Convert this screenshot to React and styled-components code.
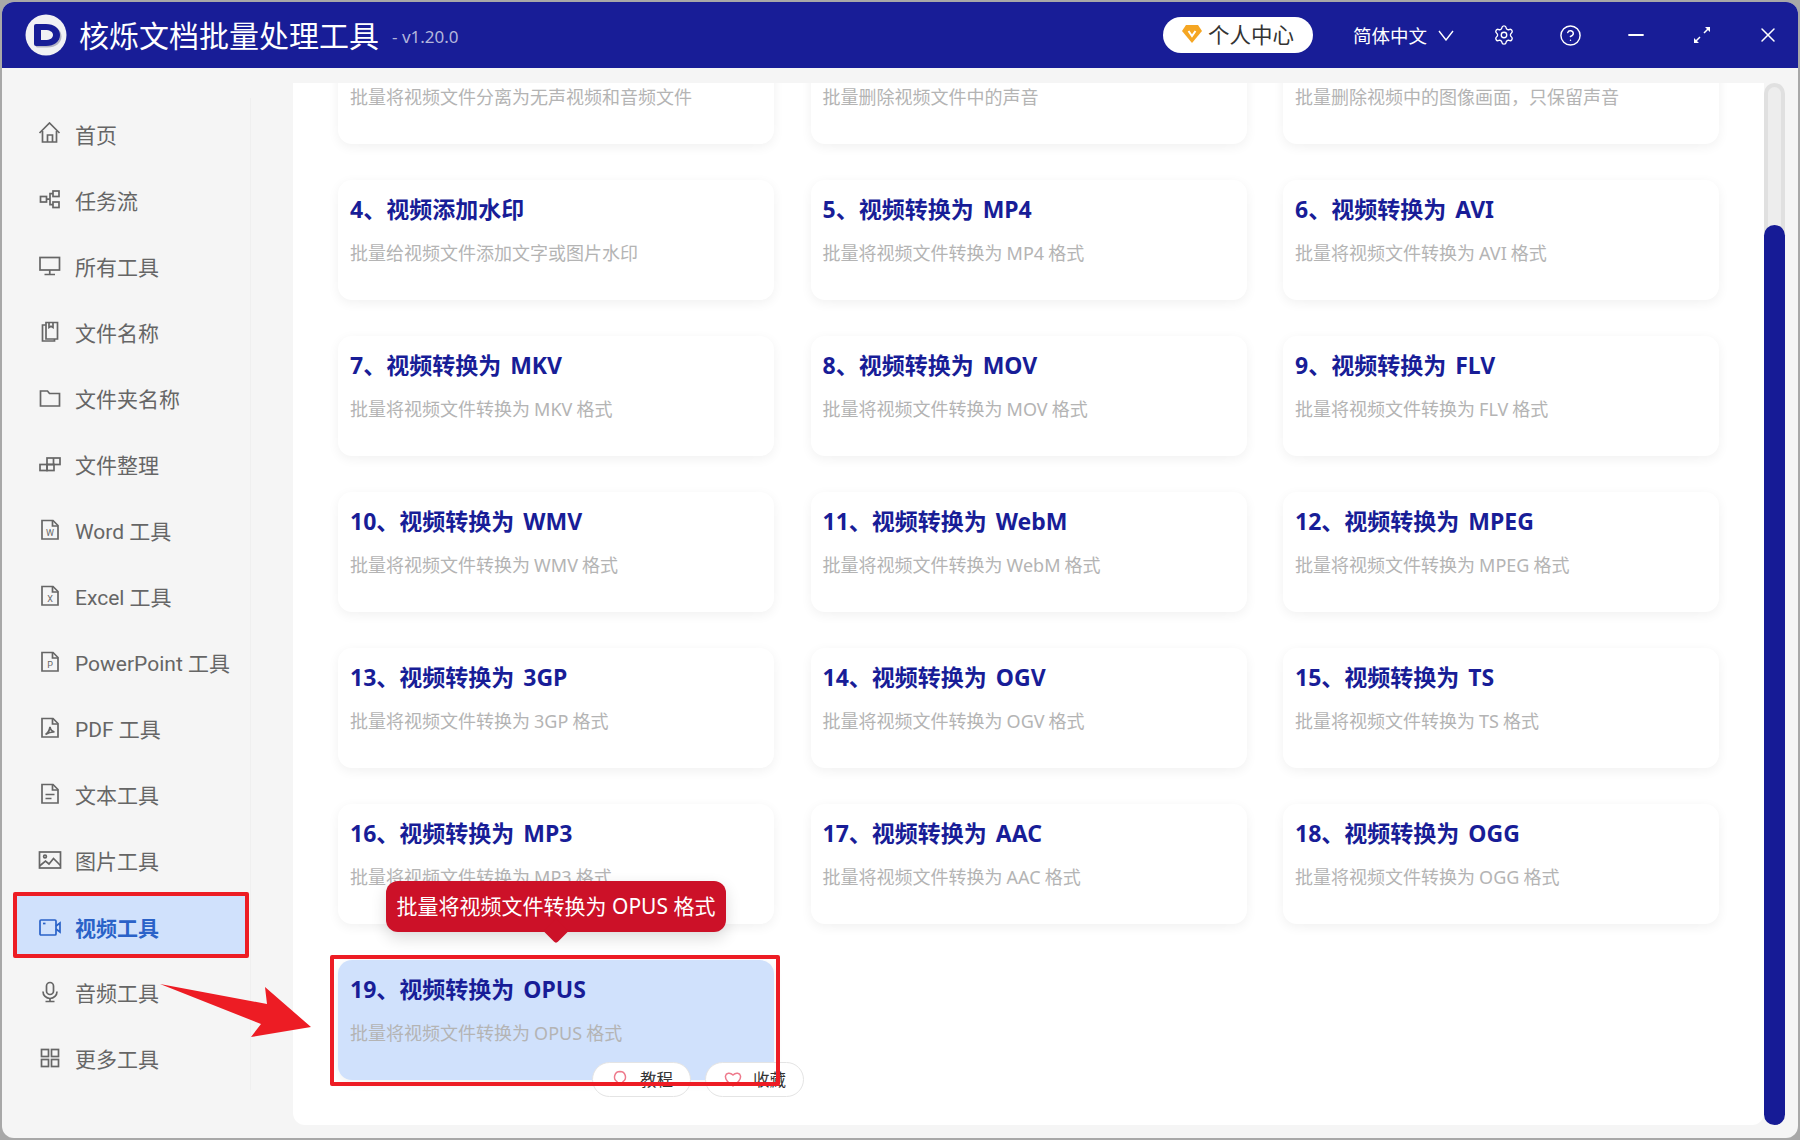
import React from 'react';
import styled, { createGlobalStyle } from 'styled-components';
import { CircleHelp, Minus, Settings, X } from 'lucide-react';

const BLUE = '#181d97';
const RED = '#ed1c24';
const FONT = '"Noto Sans", "Noto Sans CJK SC", sans-serif';

const GlobalStyle = createGlobalStyle`
  html, body {
    margin: 0;
    padding: 0;
    background: #a8a8a8;
  }
  body {
    font-family: ${FONT};
  }
  * {
    box-sizing: border-box;
  }
`;

const Window = styled.div`
  position: relative;
  display: flex;
  flex-direction: column;
  width: 1796px;
  height: 1136px;
  margin: 2px;
  background: #f5f5f5;
  border-radius: 12px;
  overflow: hidden;
`;

const TitleBar = styled.header`
  display: flex;
  align-items: center;
  flex: 0 0 66px;
  padding: 0 18px 0 23px;
  background: ${BLUE};
  color: #fff;
`;

const Logo = styled.svg`
  width: 42px;
  height: 42px;
  margin-right: 12px;
`;

const AppName = styled.h1`
  margin: 0;
  font-size: 30px;
  font-weight: 400;
  line-height: 1;
  white-space: nowrap;
  transform: translateY(1px);
`;

const Version = styled.span`
  margin-left: 13px;
  font-size: 17px;
  color: #b3b6dc;
  white-space: nowrap;
  transform: translateY(1px);
`;

const Spacer = styled.div`
  flex: 1;
`;

const UserButton = styled.button`
  display: flex;
  align-items: center;
  gap: 5px;
  width: 150px;
  height: 36px;
  margin-right: 40px;
  padding: 0 0 3px 18px;
  border: 0;
  border-radius: 18px;
  background: #fff;
  color: #333;
  font-family: ${FONT};
  font-size: 21.5px;
  white-space: nowrap;
`;

const Language = styled.div`
  display: flex;
  align-items: center;
  gap: 11px;
  width: 139px;
  font-size: 18.5px;
  white-space: nowrap;
`;

const BarIcons = styled.div`
  display: flex;
  align-items: center;
  gap: 42px;
`;

const BarIcon = styled.span`
  display: flex;
  align-items: center;
  justify-content: center;
  width: 24px;
  height: 24px;
`;

const Content = styled.div`
  display: flex;
  flex: 1;
  min-height: 0;
`;

const Sidebar = styled.nav`
  flex: 0 0 249px;
  margin: 30px 0 48px;
  padding-top: 3px;
  border-right: 1px solid #efefef;
`;

const NavItem = styled.div`
  display: flex;
  align-items: center;
  gap: 13px;
  width: 236px;
  height: 66px;
  margin-left: 11px;
  font-family: Roboto, "Noto Sans CJK SC", sans-serif;
  font-size: 21px;
  white-space: nowrap;
  color: ${(p) => (p.$active ? '#2a62c8' : '#666')};
  font-weight: ${(p) => (p.$active ? 700 : 400)};
  padding-left: ${(p) => (p.$active ? '21px' : '25px')};
  ${(p) =>
    p.$active &&
    `
    position: relative;
    top: -1px;
    padding-top: 4px;
    background: #d0e1fc;
    border: 4px solid ${RED};
    border-radius: 2px;
  `}
`;

const NavIcon = styled.svg`
  flex: 0 0 24px;
  width: 24px;
  height: 24px;
  fill: none;
  stroke: currentColor;
  stroke-width: 1.7;
`;

const Panel = styled.main`
  flex: 1;
  margin: 15px 0 13px 42px;
  background: #fff;
  border-radius: 0 0 12px 12px;
  overflow: hidden;
`;

const CardGrid = styled.div`
  display: grid;
  grid-template-columns: repeat(3, 436px);
  grid-auto-rows: 120px;
  column-gap: 36.5px;
  row-gap: 36px;
  margin-top: -59px;
  padding-left: 45px;
`;

const Card = styled.article`
  position: relative;
  padding: 15px 12px 0;
  border-radius: 14px;
  background: ${(p) => (p.$active ? '#d0e1fc' : '#fff')};
  box-shadow: 0 3px 12px rgba(0, 0, 0, 0.06);
`;

const CardTitle = styled.h3`
  height: 30px;
  margin: 0;
  font-size: 23px;
  font-weight: 700;
  line-height: 29px;
  word-spacing: 3px;
  color: ${BLUE};
  white-space: nowrap;
`;

const CardText = styled.p`
  margin: 15px 0 0;
  font-size: 18px;
  line-height: 26px;
  word-spacing: -0.6px;
  color: #b4b4b4;
  white-space: nowrap;
`;

const Tooltip = styled.div`
  position: absolute;
  left: 48px;
  bottom: calc(100% + 28px);
  z-index: 3;
  width: 340px;
  height: 51px;
  border-radius: 12px;
  background: #cc1128;
  box-shadow: 0 6px 16px rgba(0, 0, 0, 0.14);
  color: #fff;
  font-size: 21px;
  line-height: 51px;
  text-align: center;
  white-space: nowrap;

  &::after {
    content: '';
    position: absolute;
    left: 161px;
    bottom: -8px;
    width: 18px;
    height: 18px;
    border-radius: 3px;
    background: #cc1128;
    transform: rotate(45deg);
    z-index: -1;
  }
`;

const CardActions = styled.div`
  position: absolute;
  left: 254px;
  bottom: -17px;
  z-index: 1;
  display: flex;
  gap: 14px;
`;

const CardAction = styled.button`
  display: flex;
  align-items: center;
  gap: 11px;
  width: 99px;
  height: 35px;
  padding: 0 0 2px 18px;
  border: 1px solid #e4e4e4;
  border-radius: 18px;
  background: #fff;
  color: #333;
  font-family: ${FONT};
  font-size: 16.5px;
  white-space: nowrap;
`;

const ActionIcon = styled.svg`
  flex: 0 0 18px;
  width: 18px;
  height: 18px;
  fill: none;
  stroke: #ee7a8c;
  stroke-width: 1.5;
`;

const CardFrame = styled.div`
  position: absolute;
  inset: -5px -6px -6px -8px;
  z-index: 2;
  border: 4px solid ${RED};
  border-radius: 2px;
  pointer-events: none;
`;

const ScrollTrack = styled.div`
  display: flex;
  flex-direction: column;
  justify-content: flex-end;
  flex: 0 0 21px;
  margin: 15px 13px 13px 0;
  border: 4px solid #e0e0e0;
  border-bottom: 0;
  border-radius: 11px;
  background: #ededed;
`;

const ScrollThumb = styled.div`
  flex: 0 0 900px;
  margin: 0 -4px;
  border-radius: 11px;
  background: #161b96;
`;

const PointerArrow = styled.svg`
  position: absolute;
  left: 156px;
  top: 980px;
  width: 156px;
  height: 60px;
  fill: ${RED};
`;

const navIcons = {
  home: (
    <>
      <path d="M1.500 11 11.500 1l10 10" />
      <path d="M4.500 9V20h14V9" />
      <path d="M9.500 20v-7h5v7" />
    </>
  ),
  flow: (
    <>
      <rect x="2.500" y="8.500" width="6" height="5.500" />
      <rect x="15" y="3" width="6" height="5.500" />
      <rect x="15" y="14" width="6" height="5.500" />
      <path d="M8.500 11.200H12V5.700h3M12 11.200v5.500h3" />
    </>
  ),
  monitor: (
    <>
      <rect x="2" y="3.500" width="19.500" height="12.500" />
      <path d="M11.750 16v4.500M6.500 20.500h10.500" />
    </>
  ),
  files: (
    <>
      <path d="M8 5H4.500v16h12v-2" />
      <path d="M8 2.500h11.500V19H8z" />
      <path d="M11 2.500v5l2-1.200 2 1.200v-5" />
    </>
  ),
  folder: <path d="M2.500 5h7l2 2.500h10V20h-19z" />,
  organize: (
    <>
      <rect x="2" y="12.500" width="7" height="6" />
      <rect x="9" y="12.500" width="7" height="6" />
      <rect x="9" y="6" width="13" height="6.500" />
      <path d="M15.500 6v6.500" />
    </>
  ),
  video: (
    <>
      <rect x="2" y="5" width="16" height="15" rx="1" />
      <path d="M18 11l4-3v9l-4-3" />
      <path d="M5 8.500h2.500" />
    </>
  ),
  image: (
    <>
      <rect x="1.500" y="4" width="21" height="16" />
      <circle cx="7" cy="8.500" r="1.400" />
      <path d="M1.500 18l6-5 3.500 3 4.500-5.500 7 7" />
    </>
  ),
  text: (
    <>
      <path d="M4 2.500h11l5 5V21H4z" />
      <path d="M14.500 2.500v5.500H20" />
      <path d="M7.500 12.500h9M7.500 16.500h6" />
    </>
  ),
  mic: (
    <>
      <rect x="8.500" y="2.500" width="7" height="12" rx="3.500" />
      <path d="M5 11.500a7 7 0 0 0 14 0" />
      <path d="M12 18.500V21M7.500 21.500h9" />
    </>
  ),
  grid: (
    <>
      <rect x="3.500" y="3.500" width="7" height="7" />
      <rect x="13.500" y="3.500" width="7" height="7" />
      <rect x="3.500" y="13.500" width="7" height="7" />
      <rect x="13.500" y="13.500" width="7" height="7" />
    </>
  ),
};

const docIcon = (content) => (
  <>
    <path d="M4 2.500h11l5 5V21H4z" />
    <path d="M14.500 2.500v5.500H20" />
    {content}
  </>
);

const docLetter = (letter) =>
  docIcon(
    <text x="12" y="18" fontSize="9" textAnchor="middle" fill="currentColor" stroke="none">
      {letter}
    </text>,
  );

const navItems = [
  { label: '首页', icon: navIcons.home },
  { label: '任务流', icon: navIcons.flow },
  { label: '所有工具', icon: navIcons.monitor },
  { label: '文件名称', icon: navIcons.files },
  { label: '文件夹名称', icon: navIcons.folder },
  { label: '文件整理', icon: navIcons.organize },
  { label: 'Word 工具', icon: docLetter('W') },
  { label: 'Excel 工具', icon: docLetter('X') },
  { label: 'PowerPoint 工具', icon: docLetter('P') },
  {
    label: 'PDF 工具',
    icon: docIcon(<path d="M7.500 18.500c2-1 4-4.500 4.500-7.500.5 3 2 4.500 4.500 5-3-.3-6 .8-9 2.500z" />),
  },
  { label: '文本工具', icon: navIcons.text },
  { label: '图片工具', icon: navIcons.image },
  { label: '视频工具', icon: navIcons.video, active: true },
  { label: '音频工具', icon: navIcons.mic },
  { label: '更多工具', icon: navIcons.grid },
];

const tools = [
  { text: '批量将视频文件分离为无声视频和音频文件' },
  { text: '批量删除视频文件中的声音' },
  { text: '批量删除视频中的图像画面，只保留声音' },
  { title: '4、视频添加水印', text: '批量给视频文件添加文字或图片水印' },
  { title: '5、视频转换为 MP4', text: '批量将视频文件转换为 MP4 格式' },
  { title: '6、视频转换为 AVI', text: '批量将视频文件转换为 AVI 格式' },
  { title: '7、视频转换为 MKV', text: '批量将视频文件转换为 MKV 格式' },
  { title: '8、视频转换为 MOV', text: '批量将视频文件转换为 MOV 格式' },
  { title: '9、视频转换为 FLV', text: '批量将视频文件转换为 FLV 格式' },
  { title: '10、视频转换为 WMV', text: '批量将视频文件转换为 WMV 格式' },
  { title: '11、视频转换为 WebM', text: '批量将视频文件转换为 WebM 格式' },
  { title: '12、视频转换为 MPEG', text: '批量将视频文件转换为 MPEG 格式' },
  { title: '13、视频转换为 3GP', text: '批量将视频文件转换为 3GP 格式' },
  { title: '14、视频转换为 OGV', text: '批量将视频文件转换为 OGV 格式' },
  { title: '15、视频转换为 TS', text: '批量将视频文件转换为 TS 格式' },
  { title: '16、视频转换为 MP3', text: '批量将视频文件转换为 MP3 格式' },
  { title: '17、视频转换为 AAC', text: '批量将视频文件转换为 AAC 格式' },
  { title: '18、视频转换为 OGG', text: '批量将视频文件转换为 OGG 格式' },
  { title: '19、视频转换为 OPUS', text: '批量将视频文件转换为 OPUS 格式', active: true },
];

const ToolCard = ({ title, text, active }) => (
  <Card $active={active}>
    <CardTitle>{title}</CardTitle>
    <CardText>{text}</CardText>
    {active && (
      <>
        <Tooltip>{text}</Tooltip>
        <CardActions>
          <CardAction>
            <ActionIcon viewBox="0 0 18 18">
              <path d="M9 1.500a5.500 5.500 0 0 0-3 10.100V15h6v-3.400A5.500 5.500 0 0 0 9 1.500z" />
            </ActionIcon>
            教程
          </CardAction>
          <CardAction>
            <ActionIcon viewBox="0 0 18 18">
              <path d="M9 16C3 12 1 9 1.500 6 2 3 6 2 9 5c3-3 7-2 7.500 1 .5 3-1.500 6-7.500 10z" />
            </ActionIcon>
            收藏
          </CardAction>
        </CardActions>
        <CardFrame />
      </>
    )}
  </Card>
);

const App = () => (
  <>
    <GlobalStyle />
    <Window>
      <TitleBar>
        <Logo viewBox="0 0 42 42">
          <circle cx="21" cy="21" r="20.500" fill="#f1f1f4" />
          <path
            d="M11 10h10c8 0 14 4.500 14 11s-6 11-14 11H11a2 2 0 0 1-2-2V12a2 2 0 0 1 2-2z"
            fill="#b4b4c4"
            transform="translate(1.500 1.500)"
          />
          <path
            d="M11 10h10c8 0 14 4.500 14 11s-6 11-14 11H11a2 2 0 0 1-2-2V12a2 2 0 0 1 2-2z"
            fill={BLUE}
          />
          <path d="M16 16h4c5 0 8 2 8 5s-3 5-8 5h-4z" fill="#f1f1f4" />
        </Logo>
        <AppName>核烁文档批量处理工具</AppName>
        <Version>- v1.20.0</Version>
        <Spacer />
        <UserButton>
          <svg width="22" height="20" viewBox="0 0 22 20">
            <path d="M5 1h12l4 6-10 12L1 7z" fill="#f5a623" />
            <path d="M7.500 7l3.500 5 3.500-5" fill="none" stroke="#fff" strokeWidth="2" />
          </svg>
          个人中心
        </UserButton>
        <Language>
          简体中文
          <svg width="16" height="11" viewBox="0 0 16 11" fill="none" stroke="#fff" strokeWidth="1.400">
            <path d="M1 1l7 9 7-9" />
          </svg>
        </Language>
        <BarIcons>
          <BarIcon>
            <Settings size={22} strokeWidth={1.5} />
          </BarIcon>
          <BarIcon>
            <CircleHelp size={23} strokeWidth={1.5} />
          </BarIcon>
          <BarIcon>
            <Minus size={24} strokeWidth={1.8} />
          </BarIcon>
          <BarIcon>
            <svg width="20" height="20" viewBox="0 0 20 20" fill="#fff" stroke="#fff" strokeWidth="1.500">
              <path d="M12 8l5.500-5.500M2.500 17.500 8 12" fill="none" />
              <path d="M13 2h5v5zM2 13v5h5z" stroke="none" />
            </svg>
          </BarIcon>
          <BarIcon>
            <X size={26} strokeWidth={1.5} />
          </BarIcon>
        </BarIcons>
      </TitleBar>
      <Content>
        <Sidebar>
          {navItems.map((item) => (
            <NavItem key={item.label} $active={item.active}>
              <NavIcon viewBox="0 0 24 24">{item.icon}</NavIcon>
              {item.label}
            </NavItem>
          ))}
        </Sidebar>
        <Panel>
          <CardGrid>
            {tools.map((tool) => (
              <ToolCard key={tool.text} {...tool} />
            ))}
          </CardGrid>
        </Panel>
        <ScrollTrack>
          <ScrollThumb />
        </ScrollTrack>
      </Content>
      <PointerArrow viewBox="0 0 156 60">
        <path d="M2 2 109 22 107 5 153 45 93 55 103 42z" />
      </PointerArrow>
    </Window>
  </>
);

export default App;
